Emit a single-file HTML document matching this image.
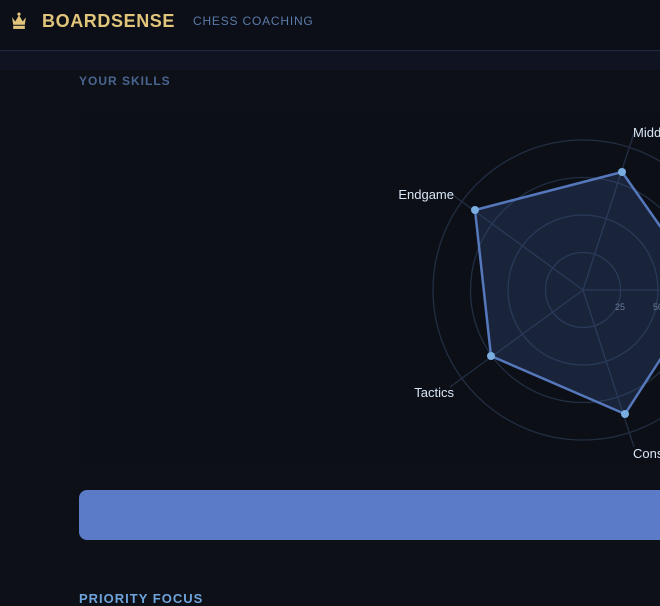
<!DOCTYPE html><html><head><style>
body{margin:0;width:660px;height:600px;overflow:hidden;background:#0d1017;font-family:"Liberation Sans",sans-serif;position:relative}
.hdr{position:absolute;left:0;top:0;width:660px;height:50px;background:#0c0f17;border-bottom:1px solid #1f2b40}
.strip{position:absolute;left:0;top:51px;width:660px;height:19px;background:#0f1322}
.logo{position:absolute;left:42px;top:11px;font-size:18px;font-weight:bold;color:#e0c57a;letter-spacing:0.6px}
.sub{position:absolute;left:193px;top:14px;font-size:12px;color:#5a7aa8;letter-spacing:0.8px}
.sec{position:absolute;left:79px;font-size:12px;font-weight:bold;letter-spacing:1px}
.card{position:absolute;left:79px;top:112px;width:600px;height:352px;background:#0c0f16}
.btn{position:absolute;left:79px;top:490px;width:620px;height:50px;background:#5b7bc9;border-radius:8px}
</style></head><body>
<div class="hdr"></div><div class="strip"></div>
<svg style="position:absolute;left:10px;top:12px" width="18" height="18" viewBox="0 0 17 17"><path d="M2 5 L5 9 L8.5 3 L12 9 L15 5 L14 12 L3 12 Z" fill="#e0c57a"/><rect x="3" y="13" width="11" height="3" fill="#e0c57a"/><circle cx="8.5" cy="2" r="1.5" fill="#e0c57a"/></svg>
<div class="logo">BOARDSENSE</div><div class="sub">CHESS COACHING</div>
<div class="sec" style="top:74px;color:#4a6590">YOUR SKILLS</div>
<div class="card"></div>
<svg style="position:absolute;left:0;top:0" width="660" height="600">
<g fill="none" stroke="#222e42" stroke-width="1.3">
<circle cx="583" cy="290" r="37.5"/><circle cx="583" cy="290" r="75"/><circle cx="583" cy="290" r="112.5"/><circle cx="583" cy="290" r="150"/>
<line x1="583" y1="290" x2="634" y2="133"/><line x1="583" y1="290" x2="450" y2="193"/><line x1="583" y1="290" x2="450" y2="387"/><line x1="583" y1="290" x2="634" y2="447"/><line x1="583" y1="290" x2="760" y2="290"/>
</g>
<polygon points="622,172 475,210 491,356 625,414 705,290" fill="rgba(60,90,150,0.28)" stroke="#5577bb" stroke-width="2.5" stroke-linejoin="round"/>
<g fill="#7aaee0"><circle cx="622" cy="172" r="4"/><circle cx="475" cy="210" r="4"/><circle cx="491" cy="356" r="4"/><circle cx="625" cy="414" r="4"/></g>
<g font-family="Liberation Sans, sans-serif" font-size="13" fill="#d8e6f5">
<text x="633" y="137">Middlegame</text><text x="454" y="199" text-anchor="end">Endgame</text><text x="454" y="397" text-anchor="end">Tactics</text><text x="633" y="458">Consistency</text></g>
<g font-size="9" fill="#6a7c96" font-family="Liberation Sans, sans-serif"><text x="615" y="310">25</text><text x="653" y="310">50</text></g>
</svg>
<div class="btn"></div>
<div class="sec" style="top:591px;color:#6fa3dc;font-size:13px">PRIORITY FOCUS</div>
</body></html>
